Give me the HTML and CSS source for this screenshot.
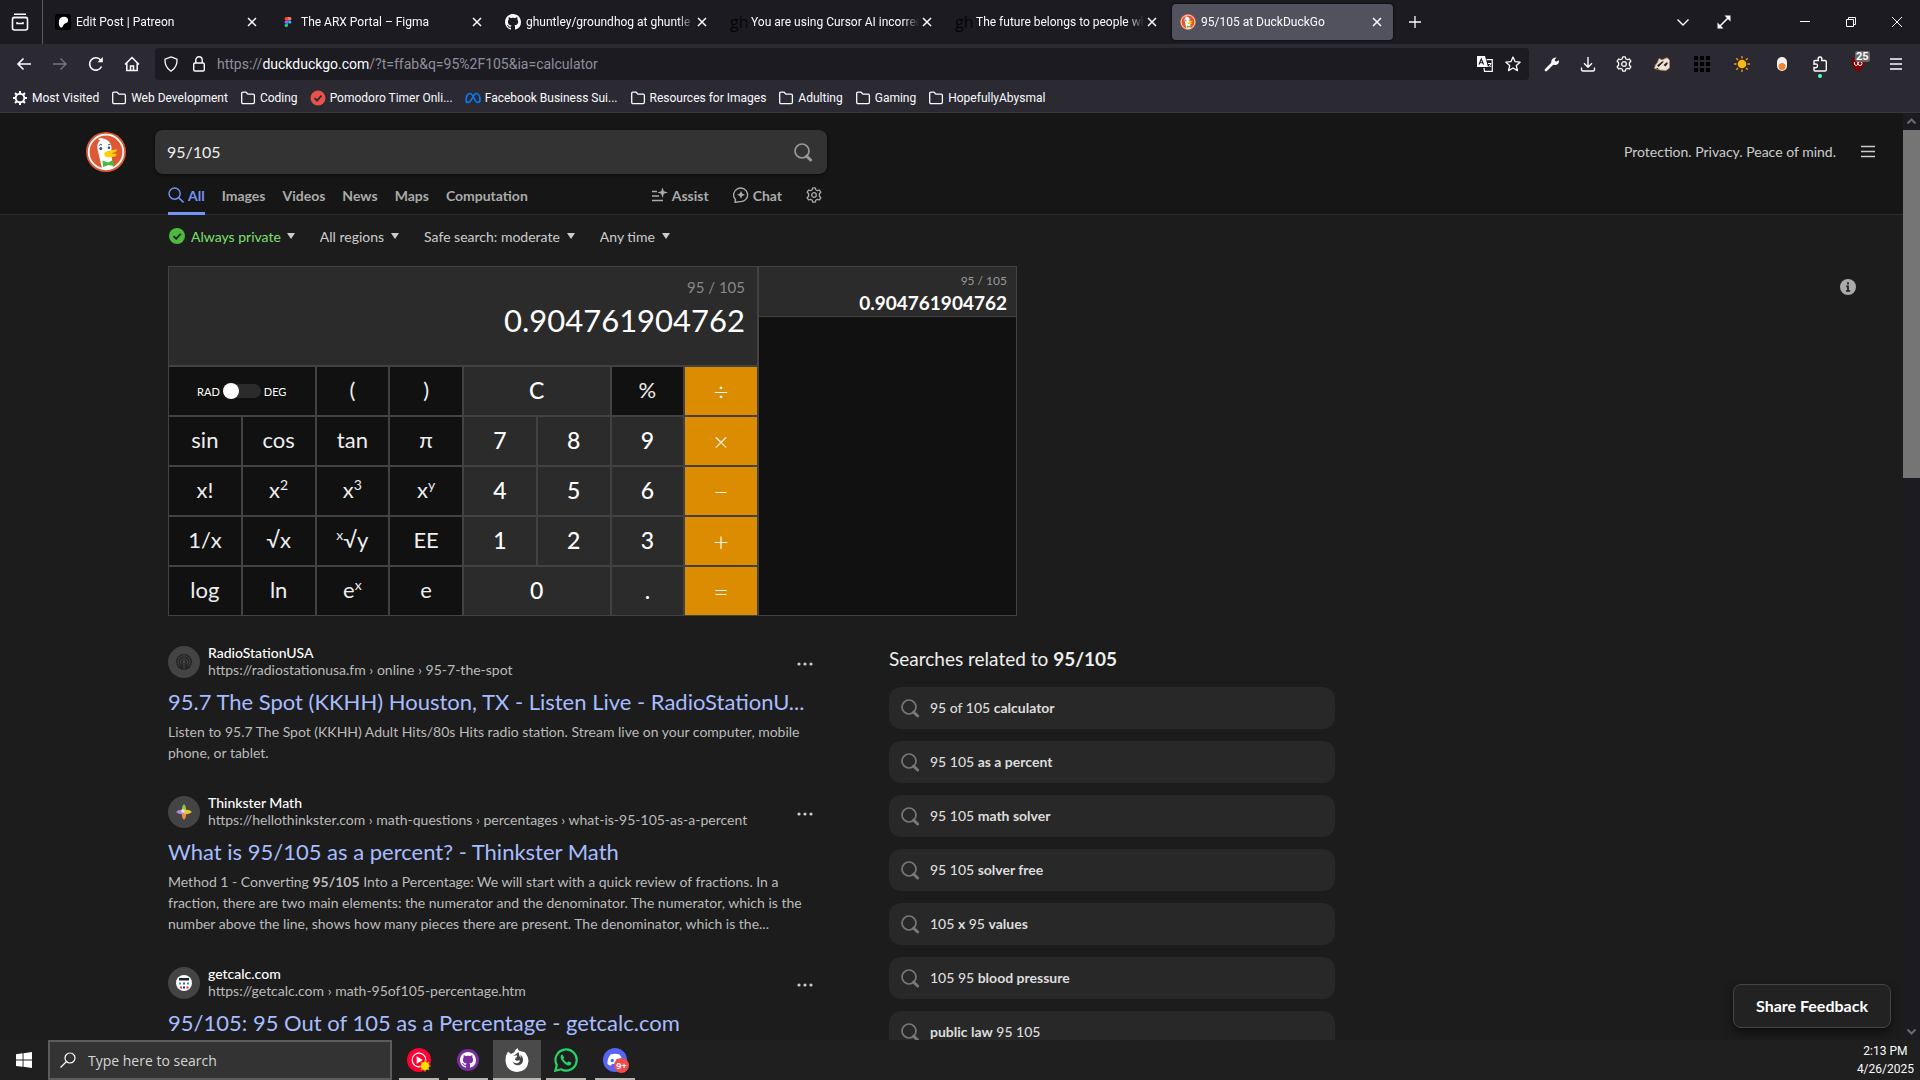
FILE: index.html
```html
<!DOCTYPE html>
<html lang="en">
<head>
<meta charset="utf-8">
<meta name="viewport" content="width=device-width, initial-scale=1">
<title>95/105 at DuckDuckGo</title>
<link rel="stylesheet" href="styles.css">
</head>
<body>
<svg class="sprite" aria-hidden="true">
  <symbol id="i-close" viewBox="0 0 16 16"><path d="M4 4l8 8M12 4l-8 8" fill="none" stroke="currentColor" stroke-width="1.5"/></symbol>
  <symbol id="i-folder" viewBox="0 0 16 16"><path d="M1.7 3.5q0-1.3 1.3-1.3h3.1l1.8 2h5.2q1.3 0 1.3 1.3v6.8q0 1.3-1.3 1.3H3q-1.3 0-1.3-1.3z" fill="none" stroke="currentColor" stroke-width="1.3"/></symbol>
  <symbol id="i-search" viewBox="0 0 20 20"><circle cx="9" cy="9" r="7" fill="none" stroke="currentColor" stroke-width="1.7"/><path d="M13.6 14.2l4 3.8" stroke="currentColor" stroke-width="3" stroke-linecap="round"/></symbol>
  <symbol id="i-loupe" viewBox="0 0 16 16"><circle cx="6.6" cy="6.6" r="5.6" fill="none" stroke="currentColor" stroke-width="1.4"/><path d="M10.6 10.6l5 4.8" stroke="currentColor" stroke-width="1.5"/></symbol>
  <symbol id="i-gear" viewBox="0 0 16 16"><path d="M6.7.8h2.6l.5 2 1.6.9 2-.7 1.4 2.2-1.4 1.6v2.4l1.4 1.6-1.4 2.2-2-.7-1.6.9-.5 2H6.7l-.5-2-1.6-.9-2 .7-1.4-2.2 1.4-1.6V6.8L1.2 5.200l1.4-2.2 2 .7 1.600-.9z" fill="none" stroke="currentColor" stroke-width="1.3" stroke-linejoin="round"/><circle cx="8" cy="8" r="2.300" fill="none" stroke="currentColor" stroke-width="1.3"/></symbol>
  <symbol id="i-menu" viewBox="0 0 16 16"><path d="M1 2.500h14M1 7.500h14M1 12.500h14" stroke="currentColor" stroke-width="1.300"/></symbol>
  <symbol id="i-dots" viewBox="0 0 16 16"><g fill="currentColor"><circle cx="2" cy="8" r="1.600"/><circle cx="8" cy="8" r="1.600"/><circle cx="14" cy="8" r="1.600"/></g></symbol>
  <symbol id="i-duck" viewBox="0 0 40 40"><circle cx="20" cy="20" r="20" fill="#de5833"/><circle cx="20" cy="20" r="17.300" fill="none" stroke="#fff" stroke-width="1.800"/><path d="M16 36.500L11.500 17q-1-6 2.500-8.500l-2-1.500q2.500-1.500 5-.5 7.500 1.500 8.500 8.500v8.500l1.500 13q-6 2-11 0z" fill="#fff"/><path d="M18.500 20.500q3-1.800 6-2l6.500-1.300-1 2.600-5 1.700 5.500.2-.5 2.300q-6 2.300-10.500.7-2-1.500-1-4.200z" fill="#fdd20a"/><path d="M16.500 28.500l5.500 2 5-2.500.7 6-5-1-5.700 2z" fill="#4cba3c"/><circle cx="14.800" cy="16.500" r="1.500" fill="#2d4f8e"/><circle cx="23" cy="15.800" r="1.300" fill="#2d4f8e"/><path d="M13 13.500q1.500-1.500 3-.7M22 13q1.300-1 2.500-.3" stroke="#2d4f8e" fill="none"/></symbol>
  <symbol id="i-octo" viewBox="0 0 16 16"><path fill="currentColor" d="M8 0C3.580 0 0 3.580 0 8c0 3.540 2.290 6.530 5.470 7.590.4.070.55-.17.55-.38 0-.19-.01-.82-.01-1.490-2.010.37-2.530-.49-2.690-.94-.09-.23-.48-.94-.82-1.130-.28-.15-.68-.52-.01-.53.63-.01 1.080.58 1.230.82.72 1.210 1.870.87 2.330.66.07-.52.28-.87.51-1.070-1.780-.2-3.640-.89-3.640-3.950 0-.87.31-1.590.82-2.150-.08-.2-.36-1.020.08-2.120 0 0 .67-.21 2.200.82.640-.18 1.320-.27 2-.27s1.360.09 2 .27c1.530-1.040 2.200-.82 2.200-.82.440 1.100.160 1.920.08 2.120.51.560.82 1.270.82 2.150 0 3.070-1.870 3.750-3.650 3.950.29.25.54.73.54 1.480 0 1.070-.01 1.930-.01 2.200 0 .21.150.46.550.38A8.010 8.010 0 0 0 16 8c0-4.420-3.580-8-8-8z"/></symbol>
</svg>

<header class="chrome">
  <div class="tabbar">
    <button class="fxview" aria-label="Firefox View"><svg viewBox="0 0 18 18"><path d="M3 1.200h12M1.500 4.500h15" stroke="currentColor" stroke-width="1.500" fill="none"/><rect x="1.500" y="4.500" width="15" height="12.500" rx="2" fill="none" stroke="currentColor" stroke-width="1.600"/><path d="M6 9v1.500h6V9" fill="none" stroke="currentColor" stroke-width="1.500"/></svg></button>
    <nav class="tabs" aria-label="Browser tabs">
      <div class="tab"><svg class="fav" viewBox="0 0 16 16"><rect width="16" height="16" rx="3" fill="#000"/><path d="M4 6.500Q5 2.800 9 2.800t4 3.500Q13 9 10 9.500q-1.500.5-2 2.500-.7 2-2.200 1.500Q3.200 12 4 6.500z" fill="#fff"/></svg><span>Edit Post | Patreon</span><button aria-label="Close tab"><svg><use href="#i-close"/></svg></button></div>
      <div class="tab"><svg class="fav" viewBox="0 0 16 16"><path d="M8 3H6.200a1.700 1.700 0 0 0 0 3.400H8z" fill="#f24e1e"/><path d="M8 3h1.800a1.700 1.700 0 0 1 0 3.400H8z" fill="#ff7262"/><path d="M8 6.400H6.200a1.700 1.700 0 0 0 0 3.400H8z" fill="#a259ff"/><circle cx="9.700" cy="8.100" r="1.700" fill="#1abcfe"/><path d="M8 9.800H6.200A1.700 1.700 0 1 0 8 11.500z" fill="#0acf83"/></svg><span>The ARX Portal – Figma</span><button aria-label="Close tab"><svg><use href="#i-close"/></svg></button></div>
      <div class="tab"><svg class="fav"><use href="#i-octo"/></svg><span>ghuntley/groundhog at ghuntle</span><button aria-label="Close tab"><svg><use href="#i-close"/></svg></button></div>
      <div class="tab"><b class="fav gh">gh</b><span>You are using Cursor AI incorrec</span><button aria-label="Close tab"><svg><use href="#i-close"/></svg></button></div>
      <div class="tab"><b class="fav gh">gh</b><span>The future belongs to people wh</span><button aria-label="Close tab"><svg><use href="#i-close"/></svg></button></div>
      <div class="tab active"><svg class="fav"><use href="#i-duck"/></svg><span>95/105 at DuckDuckGo</span><button aria-label="Close tab"><svg><use href="#i-close"/></svg></button></div>
    </nav>
    <button class="tool" aria-label="New tab"><svg viewBox="0 0 16 16"><path d="M8 2v12M2 8h12" stroke="currentColor" stroke-width="1.300"/></svg></button>
    <div class="winctl">
      <button class="tool" aria-label="List all tabs"><svg viewBox="0 0 16 16"><path d="M2.500 5.500L8 11l5.500-5.500" fill="none" stroke="currentColor" stroke-width="1.400"/></svg></button>
      <button class="tool" aria-label="Full screen"><svg viewBox="0 0 16 16"><path d="M4 12l8-8" stroke="currentColor" stroke-width="1.600"/><path d="M8.500 1.500h6v6zM1.500 8.500v6h6z" fill="currentColor"/></svg></button>
      <button class="win" aria-label="Minimize"><svg viewBox="0 0 16 16"><path d="M3 7.500h10" stroke="currentColor"/></svg></button>
      <button class="win" aria-label="Restore"><svg viewBox="0 0 16 16"><path d="M3.500 5.500h7v7h-7zM5.500 5.500v-2h7v7h-2" fill="none" stroke="currentColor"/></svg></button>
      <button class="win" aria-label="Close"><svg viewBox="0 0 16 16"><path d="M3 3l10 10M13 3L3 13" stroke="currentColor"/></svg></button>
    </div>
  </div>

  <div class="toolbar">
    <button class="nav" aria-label="Back"><svg viewBox="0 0 16 16"><path d="M15 8H2M7.500 2.500L2 8l5.500 5.500" fill="none" stroke="currentColor" stroke-width="1.600"/></svg></button>
    <button class="nav dim" aria-label="Forward"><svg viewBox="0 0 16 16"><path d="M1 8h13M8.500 2.500L14 8l-5.500 5.500" fill="none" stroke="currentColor" stroke-width="1.400"/></svg></button>
    <button class="nav" aria-label="Reload"><svg viewBox="0 0 16 16"><path d="M13.500 10.500A6.200 6.200 0 1 1 12.800 4.200L14 5.500" fill="none" stroke="currentColor" stroke-width="1.600"/><path d="M14.800 1v5.300H9.500z" fill="currentColor"/></svg></button>
    <button class="nav" aria-label="Home"><svg viewBox="0 0 16 16"><path d="M1 8.500L8 1.500l7 7M2.800 7.200V14.500h10.400V7.200M6.500 14V10h3v4" fill="none" stroke="currentColor" stroke-width="1.500"/></svg></button>
    <div class="urlbar">
      <svg viewBox="0 0 16 16"><path d="M8 .9L14 3.200q.5 7.800-6 12-6.500-4.200-6-12z" fill="none" stroke="currentColor" stroke-width="1.300"/></svg>
      <svg viewBox="0 0 16 16"><rect x="2.700" y="7" width="10.600" height="8" rx="1.300" fill="none" stroke="currentColor" stroke-width="1.400"/><path d="M4.800 7V4a3.200 3.200 0 0 1 6.400 0v3" fill="none" stroke="currentColor" stroke-width="1.400"/></svg>
      <p class="url">https://<b>duckduckgo.com</b>/?t=ffab&amp;q=95%2F105&amp;ia=calculator</p>
      <button aria-label="Translate"><svg viewBox="0 0 16 16"><path d="M0 0h8l3 11H0z" fill="#fbfbfe"/><path d="M2 8.500L4.300 3l2.300 5.500M3 6.800h2.800" fill="none" stroke="#1c1b22" stroke-width="1.100"/><path d="M9.500 3.600h5.800v11.700H7.500L7 12" fill="none" stroke="#fbfbfe" stroke-width="1.200"/><path d="M11 7.500h3.200L11.500 11M12.800 9.500l1.300 1.500" fill="none" stroke="#fbfbfe"/></svg></button>
      <button aria-label="Bookmark this page"><svg viewBox="0 0 16 16"><path d="M8 1l2.100 4.700 5 .5-3.800 3.400 1.200 5L8 12l-4.500 2.600 1.200-5L.9 6.200l5-.5z" fill="none" stroke="currentColor" stroke-width="1.300" stroke-linejoin="round"/></svg></button>
    </div>
    <div class="exts">
      <button aria-label="Tools"><svg viewBox="0 0 16 16"><path d="M2 14l7-7" stroke="currentColor" stroke-width="2.800" stroke-linecap="round"/><path d="M12.500 1.500L10.500 4l1.500 1.800 3-1.600q.3 4.300-3.500 4.800-4 .3-4.300-3Q7.500 1.500 12.500 1.500z" fill="currentColor"/></svg></button>
      <button aria-label="Downloads"><svg viewBox="0 0 16 16"><path d="M8 1v10M4 7.300L8 11.300l4-4M1.500 11.500v2q0 1.500 1.500 1.500h10q1.500 0 1.500-1.500v-2" fill="none" stroke="currentColor" stroke-width="1.400"/></svg></button>
      <button aria-label="Settings"><svg><use href="#i-gear"/></svg></button>
      <button class="roomy" aria-label="Privacy Badger"><svg viewBox="0 0 16 16"><path d="M.5 12.500Q.5 9 3.500 6.500L5 2.500 8 4l5-2.300L15.500 4v8l-3.500 2.500q-6 0-11.500-2z" fill="#eee3d8" stroke="#c98a53" stroke-width=".8"/><path d="M3 9.500L8 5.500h2L7.500 8l-3 3zM9.500 9L13 6l.8 1.500-2.300 3zM2 13l3 .3-1.500-1.500z" fill="#222"/></svg></button>
      <button class="roomy" aria-label="Apps grid"><svg viewBox="0 0 16 16"><path d="M0 0h4v4H0zM6 0h4v4H6zM12 0h4v4h-4zM0 6h4v4H0zM6 6h4v4H6zM12 6h4v4h-4zM0 12h4v4H0zM6 12h4v4H6zM12 12h4v4h-4z" fill="#000"/></svg></button>
      <button class="roomy" aria-label="Dark mode"><svg viewBox="0 0 16 16"><circle cx="8" cy="8" r="4.300" fill="#fdb813"/><path d="M8 0v2.500M8 13.500V16M0 8h2.500M13.500 8H16M2.300 2.300l1.800 1.800M11.900 11.900l1.800 1.800M2.300 13.700l1.800-1.800M11.900 4.100l1.800-1.800" stroke="#e9a512" stroke-width="1.300"/></svg></button>
      <button class="roomy" aria-label="Toggle extension"><svg viewBox="0 0 16 16"><rect x="3" y="1" width="10" height="14" rx="5" fill="#f2f2f2"/><circle cx="8" cy="10.500" r="3.500" fill="#f58233"/></svg></button>
      <button class="dot" aria-label="Extensions"><svg viewBox="0 0 16 16"><path d="M2 5.500q0-1 1-1h3.300q-.8-3.500 1.700-3.500t1.700 3.500H13q1.300 0 1.300 1.300V13.700q0 1.300-1.300 1.300H3q-1 0-1-1v-2.500q3.500.8 3.500-1.700T2 8.200z" fill="none" stroke="currentColor" stroke-width="1.400"/></svg></button>
      <button class="roomy ublock" aria-label="uBlock Origin"><svg viewBox="0 0 16 16"><path d="M1.500 2q4 .5 6.500-2 2.500 2.500 6.500 2 1 9-6.500 14Q.5 11 1.500 2z" fill="#800000"/><path d="M4.500 6v2.500q1.700 2 3.300 0V6M8 7.500a2 2 0 1 0 4 0 2 2 0 1 0-4 0" fill="none" stroke="#fff"/></svg><span>25</span></button>
      <button aria-label="Open application menu"><svg viewBox="0 0 16 16"><path d="M2 3h12M2 8h12M2 13h12" stroke="currentColor" stroke-width="1.500"/></svg></button>
    </div>
  </div>

  <nav class="bookmarks" aria-label="Bookmarks">
    <a href="#"><svg viewBox="0 0 16 16"><circle cx="8" cy="8" r="4.300" fill="none" stroke="currentColor" stroke-width="1.900"/><path d="M8 1v2.500M8 12.500V15M1 8h2.500M12.500 8H15M3 3l1.800 1.800M11.200 11.200L13 13M3 13l1.800-1.800M11.200 4.800L13 3" stroke="currentColor" stroke-width="2"/></svg>Most Visited</a>
    <a href="#"><svg><use href="#i-folder"/></svg>Web Development</a>
    <a href="#"><svg><use href="#i-folder"/></svg>Coding</a>
    <a href="#"><svg viewBox="0 0 16 16"><circle cx="8" cy="8" r="7.500" fill="#e9524a"/><path d="M4.500 8l2.500 2.700 4.500-5" fill="none" stroke="#2b2a33" stroke-width="1.800"/></svg>Pomodoro Timer Onli...</a>
    <a href="#"><svg viewBox="0 0 16 16"><path d="M1 10.500C1 6 3 3.500 5 3.500c3.500 0 4.500 9 7.700 9 1.500 0 2.300-1 2.300-3 0-3.500-1.700-6-3.800-6-3.200 0-4.500 9-7.800 9-1.600 0-2.400-1-2.400-2z" fill="none" stroke="#0a78ef" stroke-width="1.700"/></svg>Facebook Business Sui...</a>
    <a href="#"><svg><use href="#i-folder"/></svg>Resources for Images</a>
    <a href="#"><svg><use href="#i-folder"/></svg>Adulting</a>
    <a href="#"><svg><use href="#i-folder"/></svg>Gaming</a>
    <a href="#"><svg><use href="#i-folder"/></svg>HopefullyAbysmal</a>
  </nav>
</header>

<div class="viewport">
  <div class="page">
    <header class="site-head">
      <a class="logo" href="#" aria-label="DuckDuckGo home"><svg><use href="#i-duck"/></svg></a>
      <div class="search-col">
        <form class="searchbox" role="search">
          <input type="text" value="95/105" aria-label="Search query">
          <button type="button" aria-label="Search"><svg><use href="#i-search"/></svg></button>
        </form>
        <nav class="verticals" aria-label="Search categories">
          <a class="on" href="#"><svg><use href="#i-loupe"/></svg>All</a>
          <a href="#">Images</a>
          <a href="#">Videos</a>
          <a href="#">News</a>
          <a href="#">Maps</a>
          <a href="#">Computation</a>
          <a class="push" href="#"><svg viewBox="0 0 16 16"><path d="M0 4.500h5M0 9h7M0 13.500h11" stroke="currentColor" stroke-width="1.400"/><path d="M10.500.5l1.300 3.700L16 5.500l-4.200 1.300-1.300 4.200-1.300-4.200L5.500 5.500l3.700-1.300z" fill="currentColor"/></svg>Assist</a>
          <a class="chat" href="#"><svg viewBox="0 0 16 16"><path d="M2.500 12.500A7 6.800 0 1 1 7 14.600L2 15.200z" fill="none" stroke="currentColor" stroke-width="1.400" stroke-linejoin="round"/><path d="M8 3.800l1.200 2.800L12 7.800 9.200 9 8 11.800 6.800 9 4 7.800l2.800-1.200z" fill="currentColor"/></svg>Chat</a>
          <button class="cog" aria-label="Settings"><svg><use href="#i-gear"/></svg></button>
        </nav>
      </div>
      <div class="head-right">
        <a href="#">Protection. Privacy. Peace of mind.</a>
        <button aria-label="Menu"><svg><use href="#i-menu"/></svg></button>
      </div>
    </header>

    <main class="content">
      <div class="filters">
        <label class="private"><svg class="tick" viewBox="0 0 16 16"><circle cx="8" cy="8" r="8" fill="#4cba3c"/><path d="M4.500 8.200l2.600 2.600 4.600-5" fill="none" stroke="#1c1c1c" stroke-width="1.800"/></svg><select aria-label="Privacy protection"><option>Always private</option></select></label>
        <label><select aria-label="Region"><option>All regions</option></select></label>
        <label><select aria-label="Safe search"><option>Safe search: moderate</option></select></label>
        <label><select aria-label="Date"><option>Any time</option></select></label>
      </div>

      <div class="answer">
        <section class="calc" aria-label="Calculator">
          <div class="calc-main">
            <div class="display"><small>95 / 105</small><output>0.904761904762</output></div>
            <div class="keys">
              <div class="angle"><label for="deg">RAD</label><input id="deg" type="checkbox" role="switch"><label for="deg">DEG</label></div>
              <button>(</button><button>)</button><button class="num wide">C</button><button>%</button><button class="op">÷</button>
              <button>sin</button><button>cos</button><button>tan</button><button>π</button><button class="num">7</button><button class="num">8</button><button class="num">9</button><button class="op">×</button>
              <button>x!</button><button>x<sup>2</sup></button><button>x<sup>3</sup></button><button>x<sup>y</sup></button><button class="num">4</button><button class="num">5</button><button class="num">6</button><button class="op">−</button>
              <button>1/x</button><button>√x</button><button><sup>x</sup>√y</button><button>EE</button><button class="num">1</button><button class="num">2</button><button class="num">3</button><button class="op">+</button>
              <button>log</button><button>ln</button><button>e<sup>x</sup></button><button>e</button><button class="num wide">0</button><button class="num">.</button><button class="op">=</button>
            </div>
          </div>
          <div class="history">
            <div class="entry"><small>95 / 105</small><b>0.904761904762</b></div>
          </div>
        </section>
        <button class="info" aria-label="About this answer"><svg viewBox="0 0 16 16"><circle cx="8" cy="8" r="8" fill="#aaa"/><path d="M8 3.300v2.200M6.300 7.300H8v4.200M6 12h4.200" fill="none" stroke="#1c1c1c" stroke-width="1.700"/></svg></button>
      </div>

      <div class="columns">
        <div class="results">
          <article class="result">
            <header>
              <span class="site"><svg viewBox="0 0 16 16"><circle cx="8" cy="8" r="8" fill="#242424"/><path d="M8 7v8M5.500 10.500a3.600 3.600 0 1 1 5 0M4 12.300a6 6 0 1 1 8 0" fill="none" stroke="#4a4a4a" stroke-width="1"/><circle cx="8" cy="7.500" r="1.500" fill="#4a4a4a"/></svg></span>
              <p><b>RadioStationUSA</b><a href="#">https://radiostationusa.fm › online › 95-7-the-spot</a></p>
              <button aria-label="More options"><svg><use href="#i-dots"/></svg></button>
            </header>
            <h2><a href="#">95.7 The Spot (KKHH) Houston, TX - Listen Live - RadioStationU...</a></h2>
            <p class="snippet">Listen to 95.7 The Spot (KKHH) Adult Hits/80s Hits radio station. Stream live on your computer, mobile<br>phone, or tablet.</p>
          </article>
          <article class="result">
            <header>
              <span class="site"><svg viewBox="0 0 16 16"><path d="M8 0q3 3 1.800 8H6.200Q5 3 8 0z" fill="#9ac33c"/><path d="M8 16q3-3 1.800-8H6.200Q5 13 8 16z" fill="#f08a3c"/><path d="M0 8q3-3 8-1.800v3.600Q3 11 0 8z" fill="#b48ad0"/><path d="M16 8q-3-3-8-1.800v3.600Q13 11 16 8z" fill="#f2c230"/><circle cx="7" cy="7" r="1.800" fill="#cfe6ee"/></svg></span>
              <p><b>Thinkster Math</b><a href="#">https://hellothinkster.com › math-questions › percentages › what-is-95-105-as-a-percent</a></p>
              <button aria-label="More options"><svg><use href="#i-dots"/></svg></button>
            </header>
            <h2><a href="#">What is 95/105 as a percent? - Thinkster Math</a></h2>
            <p class="snippet">Method 1 - Converting <b>95/105</b> Into a Percentage: We will start with a quick review of fractions. In a<br>fraction, there are two main elements: the numerator and the denominator. The numerator, which is the<br>number above the line, shows how many pieces there are present. The denominator, which is the...</p>
          </article>
          <article class="result">
            <header>
              <span class="site"><svg viewBox="0 0 16 16"><circle cx="8" cy="8" r="8" fill="#fff"/><path d="M3 3h10v2.500H3z" fill="#223"/><path d="M3 7.500h2v2H3z" fill="#2a9"/><path d="M7 7.500h2v2H7z" fill="#555"/><path d="M11 7.500h2v2h-2z" fill="#29c"/><path d="M4 11.500h2v2H4z" fill="#e33"/><path d="M7 11.500h2v2H7z" fill="#22c"/><path d="M10.500 11.500h2v2h-2z" fill="#e22"/></svg></span>
              <p><b>getcalc.com</b><a href="#">https://getcalc.com › math-95of105-percentage.htm</a></p>
              <button aria-label="More options"><svg><use href="#i-dots"/></svg></button>
            </header>
            <h2><a href="#">95/105: 95 Out of 105 as a Percentage - getcalc.com</a></h2>
          </article>
        </div>
        <aside class="related">
          <h3>Searches related to <b>95/105</b></h3>
          <ul>
            <li><a href="#"><svg><use href="#i-search"/></svg><span>95 of 105 <b>calculator</b></span></a></li>
            <li><a href="#"><svg><use href="#i-search"/></svg><span>95 105 <b>as a percent</b></span></a></li>
            <li><a href="#"><svg><use href="#i-search"/></svg><span>95 105 <b>math solver</b></span></a></li>
            <li><a href="#"><svg><use href="#i-search"/></svg><span>95 105 <b>solver free</b></span></a></li>
            <li><a href="#"><svg><use href="#i-search"/></svg><span>105 <b>x</b> 95 <b>values</b></span></a></li>
            <li><a href="#"><svg><use href="#i-search"/></svg><span>105 95 <b>blood pressure</b></span></a></li>
            <li><a href="#"><svg><use href="#i-search"/></svg><span><b>public law</b> 95 105</span></a></li>
          </ul>
        </aside>
      </div>
    </main>
    <button class="feedback">Share Feedback</button>
  </div>
  <div class="scroll" aria-hidden="true">
    <svg viewBox="0 0 17 17"><path d="M4.500 10.500l4-4 4 4" fill="none" stroke="currentColor" stroke-width="2"/></svg>
    <div class="track"><div class="thumb"></div></div>
    <svg viewBox="0 0 17 17"><path d="M4.500 6.500l4 4 4-4" fill="none" stroke="currentColor" stroke-width="2"/></svg>
  </div>
</div>

<footer class="taskbar">
  <button class="start" aria-label="Start"><svg viewBox="0 0 16 16"><path d="M0 2.200L6.600 1.300v6.300H0zM7.500 1.200L16 0v7.600H7.500zM0 8.500h6.600v6.300L0 13.900zM7.500 8.500H16V16l-8.500-1.200z" fill="#fff"/></svg></button>
  <label class="tasksearch"><svg viewBox="0 0 16 16"><circle cx="10" cy="6" r="5" fill="none" stroke="#fff" stroke-width="1.200"/><path d="M6.500 9.500L.5 15.500" stroke="#fff" stroke-width="1.200"/></svg><input type="text" placeholder="Type here to search" aria-label="Type here to search"></label>
  <nav class="apps" aria-label="Running apps">
    <button aria-label="YouTube Music"><svg viewBox="0 0 24 24"><circle cx="12" cy="12" r="12" fill="#f03"/><circle cx="12" cy="12" r="6.800" fill="none" stroke="#fff" stroke-width="1.200"/><path d="M9.700 8.300l6 3.700-6 3.700z" fill="#fff"/><path d="M18 12.500v11M12.500 18h11M14 14l8 8M22 14l-8 8" stroke="#d99a00" stroke-width="1.500"/><circle cx="18" cy="18" r="4" fill="#ffe000"/></svg></button>
    <button aria-label="GitHub"><svg viewBox="0 0 24 24"><circle cx="12" cy="12" r="11" fill="#7a2da0"/><g transform="translate(4 4)" color="#fff"><use href="#i-octo" width="16" height="16"/></g></svg></button>
    <button class="on" aria-label="Firefox"><svg viewBox="0 0 24 24"><path d="M3 3.500L6 6q2-1.500 3-1.500Q10 1 13 0q-.5 2 1.500 3L19 4l1.500 1Q23.500 9 23.500 13 22.500 23.500 12 24 1 23 .5 12.500.5 7 3 3.500z" fill="#fff"/><path d="M8.500 8l3.500-.7q1 1.500-1.500 2.700l-.5 1.800q2.500 1.700 4.500.2 1 1.800-1 2.800-3.500 1.500-6-1.200 1.500 4 6 3.600 5-1 4.500-6.200-.5-3-2.500-4.500.5 2-.2 3.500Q14 7 13.500 4" fill="#444"/></svg></button>
    <button aria-label="WhatsApp"><svg viewBox="0 0 24 24"><path d="M1.300 22.700l1.500-5.600A10.600 10.600 0 1 1 7 21.300z" fill="none" stroke="#25d366" stroke-width="2.200"/><path d="M8.500 6.500L7 7.200Q5.800 9.500 8 12.800t6 4.700q3 .5 3.500-2.700L14.500 13.300l-1.300 1.500q-2.500-1-4-3.700l1-1.300z" fill="#25d366"/></svg></button>
    <button aria-label="Discord, 9+ notifications"><svg viewBox="0 0 24 24"><circle cx="12" cy="12" r="12" fill="#5865f2"/><path d="M7.500 6.500q4.500-1.500 9 0Q20 11 19.500 16q-2 1.500-3.500 1.500l-1-1.500H9l-1 1.500Q6 17.500 4.500 16 4 11 7.500 6.500z" fill="#fff"/><circle cx="9.300" cy="12.500" r="1.700" fill="#5865f2"/><circle cx="14.700" cy="12.500" r="1.700" fill="#5865f2"/></svg><span>9+</span></button>
  </nav>
  <p class="clock"><time>2:13 PM</time><time>4/26/2025</time></p>
</footer>
</body>
</html>
```
FILE: styles.css
```css
* { box-sizing: border-box; }
html, body { height: 100%; }
body {
  margin: 0;
  display: flex;
  flex-direction: column;
  background: #1c1c1c;
  color: #fff;
  font-family: Lato, "Liberation Sans", sans-serif;
  font-size: 14px;
  overflow: hidden;
}
p, h2, h3, ul { margin: 0; padding: 0; font-weight: 400; }
ul { list-style: none; }
a { color: inherit; text-decoration: none; }
button, input, select { font: inherit; color: inherit; background: none; border: 0; padding: 0; margin: 0; outline: 0; }
button { display: flex; align-items: center; justify-content: center; }
svg { display: block; flex: none; width: 16px; height: 16px; }
.sprite { position: absolute; width: 0; height: 0; }

/* Browser chrome */
.chrome, .taskbar { font-family: Roboto, "Noto Sans", sans-serif; font-size: 12px; flex: none; color: #fbfbfe; }
.chrome { background: #2b2a33; border-bottom: 1px solid #38383d; }
.tabbar { display: flex; align-items: center; height: 44px; background: #1c1b22; }
.fxview { width: 43px; height: 44px; padding-right: 2px; border-right: 1px solid #5b5b66; }
.fxview svg { width: 18px; height: 18px; }
.tabs { display: flex; gap: 4px; padding: 0 1px 0 4px; }
.tab { display: flex; align-items: center; width: 221px; height: 36px; padding: 0 8px; border-radius: 4px; }
.tab.active { background: #52525e; box-shadow: 0 0 3px #000; }
.tab span { flex: 1; padding-left: 5px; overflow: hidden; white-space: nowrap; mask-image: linear-gradient(to left, transparent, #000 16px); }
.tab .gh { width: 16px; color: #050505; font: 500 16px/20px "Open Sans", sans-serif; overflow: visible; }
.tab button { width: 16px; height: 20px; }
.tool { width: 41px; height: 36px; }
.winctl { display: flex; margin-left: auto; }
.win { width: 46px; height: 36px; }
.winctl .tool + .win { margin-left: 38px; }

.toolbar { display: flex; align-items: center; height: 40px; padding: 4px 6px; }
.nav { width: 36px; height: 32px; }
.dim { color: #77767e; }
.urlbar { flex: 1; display: flex; align-items: center; height: 32px; margin-left: 5px; padding: 0 8px; border-radius: 4px; background: #1c1b22; gap: 12px; }
.url { flex: 1; margin-left: -2px; color: #8f8f9a; font-size: 14px; }
.url b { color: #fbfbfe; font-weight: 400; }
.exts { display: flex; margin-left: 5px; }
.exts button { position: relative; width: 36px; }
.exts .roomy { width: 40px; }
.dot::after { content: ""; position: absolute; left: 16px; top: 18px; width: 4px; height: 4px; border-radius: 2px; background: #54ffbd; }
.ublock span { position: absolute; left: 17px; top: -5px; padding: 0 1px; border-radius: 2px; background: #666; font-size: 11px; line-height: 11px; font-weight: 700; }

.bookmarks { display: flex; align-items: center; height: 28px; padding: 0 12px; gap: 12px; }
.bookmarks a { display: flex; align-items: center; gap: 4px; white-space: nowrap; }

/* Page viewport */
.viewport { flex: 1; min-height: 0; display: flex; overflow: hidden; }
.page { position: relative; flex: 1; min-width: 0; overflow: hidden; }
.scroll { width: 17px; display: flex; flex-direction: column; background: #1c1b22; color: #6a6a6a; }
.scroll svg { width: 17px; height: 17px; }
.track { flex: 1; }
.thumb { height: 39%; background: #757575; }

.site-head { display: flex; align-items: flex-start; padding: 17px 27px 0 86px; background: #161616; border-bottom: 1px solid #2c2c2c; }
.logo { margin: 2px 29px 0 0; }
.logo svg { width: 40px; height: 40px; }
.search-col { width: 672px; }
.searchbox { display: flex; align-items: center; height: 44px; padding: 0 14px 0 12px; border-radius: 8px; background: #333; box-shadow: 0 1px 3px #0008; }
.searchbox input { flex: 1; padding-bottom: 2px; font-size: 16px; color: #eee; }
.searchbox svg { width: 20px; height: 20px; color: #999; }
.verticals { display: flex; gap: 17px; padding: 0 5px 0 13px; height: 41px; margin-bottom: -1px; color: #aaa; font-weight: 700; font-size: 14px; }
.verticals a { display: flex; align-items: center; gap: 4px; padding-top: 4px; border-bottom: 3px solid transparent; }
.verticals .on { color: #7295f6; border-bottom-color: #7295f6; }
.verticals .push { margin-left: auto; }
.verticals .chat, .verticals .cog { margin-left: 7px; }
.head-right { display: flex; align-items: center; gap: 24px; height: 44px; margin-left: auto; color: #ccc; }
.head-right a { padding-bottom: 2px; }

.content { padding: 0 168px; }
.filters { display: flex; align-items: center; gap: 25px; height: 42px; color: #ccc; font-size: 14px; }
.filters label { display: flex; align-items: center; gap: 7px; }
.filters label::after { content: ""; border: 4px solid transparent; border-top: 6px solid #ccc; border-bottom: 0; }
.filters select { appearance: none; field-sizing: content; }
.filters .tick { margin-left: 1px; }
.filters .private { color: #7be06b; gap: 6px; }

.answer { display: flex; justify-content: space-between; margin-top: 9px; }
.calc { display: flex; width: 849px; align-items: flex-start; }
.calc-main { flex: 1; background: #424242; border: 1px solid #424242; }
.display { display: flex; flex-direction: column; align-items: flex-end; height: 98px; padding: 10px 12px; background: #2b2b2b; }
.display small { font-size: 15px; line-height: 20px; color: #888; }
.display output { font-size: 31px; line-height: 46px; }
.keys { display: grid; grid-template-columns: repeat(8, 1fr); grid-auto-rows: 48px; gap: 2px; margin-top: 2px; }
.keys button { display: block; background: #111; font-size: 22px; font-weight: 400; padding-bottom: 2px; white-space: nowrap; text-align: center; line-height: 44px; color: #eee; }
.keys sup { font-size: 14px; line-height: 1; }
.keys .num { background: #2b2b2b; font-size: 23px; font-weight: 500; color: #fff; }
.keys .op { background: #db8c00; font-size: 26px; font-weight: 300; line-height: 48px; padding: 0; color: #fff; }
.keys .wide, .angle { grid-column: span 2; }
.angle { display: flex; align-items: center; justify-content: center; gap: 3px; background: #111; font-size: 11px; }
.angle input { appearance: none; width: 38px; height: 14px; margin: 0; border-radius: 7px; background: #2b2b2b; display: flex; align-items: center; }
.angle input::before { content: ""; width: 16px; height: 16px; border-radius: 8px; background: #fff; }
.history { width: 259px; align-self: stretch; background: #111; border: 1px solid #424242; }
.entry { display: flex; flex-direction: column; align-items: flex-end; height: 50px; padding: 4px 9px; background: #2b2b2b; border-bottom: 1px solid #424242; }
.entry small { font-size: 12px; line-height: 20px; color: #999; }
.entry b { font-size: 19px; line-height: 23px; }
.info { align-self: flex-start; margin: 13px -121px 0 0; }

.columns { display: flex; gap: 68px; padding-top: 28px; }
.results { width: 653px; }
.result { padding-bottom: 31px; }
.result header { display: flex; align-items: center; height: 36px; }
.site { display: flex; align-items: center; justify-content: center; width: 32px; height: 32px; border-radius: 16px; background: #444; margin-right: 8px; }
.result header p { flex: 1; padding-bottom: 2px; font-size: 14px; line-height: 17px; white-space: nowrap; color: #bbb; }
.result header b { display: block; color: #fff; font-weight: 500; }
.result header button { margin-right: 8px; padding-top: 4px; color: #ccc; }
.result h2 { margin-top: 7px; font-size: 22px; line-height: 30px; color: #a7bdff; white-space: nowrap; }
.snippet { margin-top: 4px; font-size: 14px; line-height: 21px; color: #bbb; white-space: nowrap; }
.related { width: 446px; }
.related h3 { font-size: 19px; line-height: 24px; margin: 3px 0 16px; color: #eee; }
.related ul { display: grid; gap: 12px; }
.related a { display: flex; align-items: center; gap: 10px; height: 42px; padding: 0 11px; border-radius: 12px; background: #282828; color: #ddd; font-weight: 500; }
.related span { padding-bottom: 2px; }
.related svg { width: 20px; height: 20px; color: #777; }
.feedback { position: absolute; right: 12px; bottom: 12px; width: 158px; height: 44px; padding-bottom: 2px; border: 1px solid #444; border-radius: 8px; background: #222; font-size: 16px; font-weight: 700; box-shadow: 0 4px 10px #0008; }

/* Windows taskbar */
.taskbar { display: flex; height: 40px; background: #1f1f1f; }
.start { width: 48px; }
.tasksearch { display: flex; align-items: center; gap: 12px; width: 344px; padding: 0 10px; background: #333; border: 2px solid #5c5c5c; }
.tasksearch input { flex: 1; font-family: "Open Sans", sans-serif; font-size: 14px; }
.tasksearch input::placeholder { color: #d5d5d5; opacity: 1; }
.apps { display: flex; gap: 1px; margin-left: 3px; }
.apps button { position: relative; width: 48px; }
.apps button::after { content: ""; position: absolute; left: 4px; right: 4px; bottom: 0; height: 2px; background: #b8b5b0; }
.apps .on { background: #4a4a4a; }
.apps .on::after { left: 0; right: 0; }
.apps svg { width: 24px; height: 24px; }
.apps span { position: absolute; left: 23px; top: 18px; width: 15px; height: 15px; border-radius: 8px; background: #ef4b4b; font: 700 9px/15px "Open Sans", sans-serif; }
.clock { display: flex; flex-direction: column; align-items: center; justify-content: center; margin-left: auto; padding-right: 6px; line-height: 18px; }
```
